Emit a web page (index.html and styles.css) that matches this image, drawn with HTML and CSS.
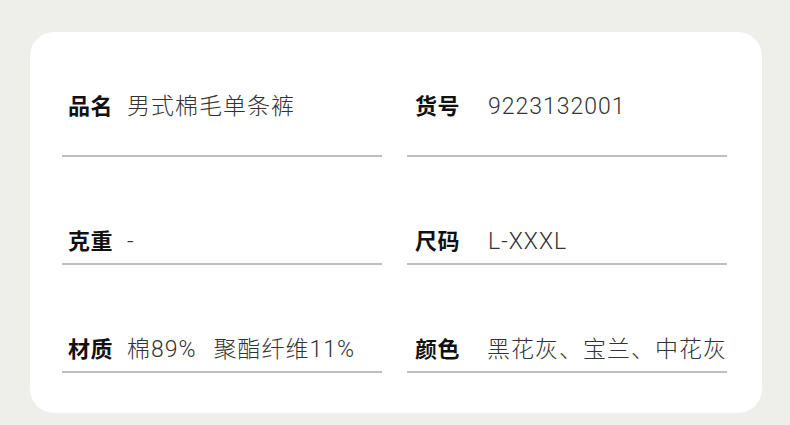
FILE: index.html
```html
<!DOCTYPE html>
<html lang="zh-CN">
<head>
<meta charset="utf-8">
<title>商品信息</title>
<link rel="stylesheet" href="styles.css">
</head>
<body>
<div class="card">
  <div class="grid">
    <div class="item item-first">
      <span class="label">品名</span>
      <span class="value">男式棉毛单条裤</span>
    </div>
    <div class="item item-first item-right">
      <span class="label">货号</span>
      <span class="value">9223132001</span>
    </div>
    <div class="item">
      <span class="label">克重</span>
      <span class="value">-</span>
    </div>
    <div class="item item-right">
      <span class="label">尺码</span>
      <span class="value">L-XXXL</span>
    </div>
    <div class="item">
      <span class="label">材质</span>
      <span class="value">棉89%<span class="sep"></span>聚酯纤维11%</span>
    </div>
    <div class="item item-right">
      <span class="label">颜色</span>
      <span class="value">黑花灰、宝兰、中花灰</span>
    </div>
  </div>
</div>
</body>
</html>
```

FILE: styles.css
```css
html, body {
  margin: 0;
  padding: 0;
}

body {
  background: #eeeeea;
  width: 790px;
  height: 425px;
  overflow: hidden;
  font-family: Roboto, "Noto Sans CJK SC", sans-serif;
}

.card {
  margin: 32px 0 0 30px;
  width: 732px;
  height: 381px;
  box-sizing: border-box;
  background: #ffffff;
  border-radius: 24px;
  padding: 57px 35px 0 32px;
}

.grid {
  display: grid;
  grid-template-columns: 320px 320px;
  column-gap: 25px;
  row-gap: 67px;
}

.item {
  display: flex;
  align-items: baseline;
  height: 30px;
  padding: 0 0 9px 6px;
  border-bottom: 2px solid #c0c0c0;
  white-space: nowrap;
}

.item-first {
  padding-bottom: 36px;
}

.item-right {
  padding-left: 8px;
}

.label {
  font-family: "Noto Sans CJK SC", sans-serif;
  font-weight: 700;
  font-size: 22px;
  line-height: 30px;
  letter-spacing: 0.5px;
  color: #111111;
  margin-right: 14px;
}

.item-right .label {
  width: 73px;
  margin-right: 0;
}

.value {
  font-size: 23px;
  line-height: 30px;
  font-weight: 300;
  letter-spacing: 1px;
  color: #333333;
}

.sep {
  display: inline-block;
  width: 17px;
}
```
